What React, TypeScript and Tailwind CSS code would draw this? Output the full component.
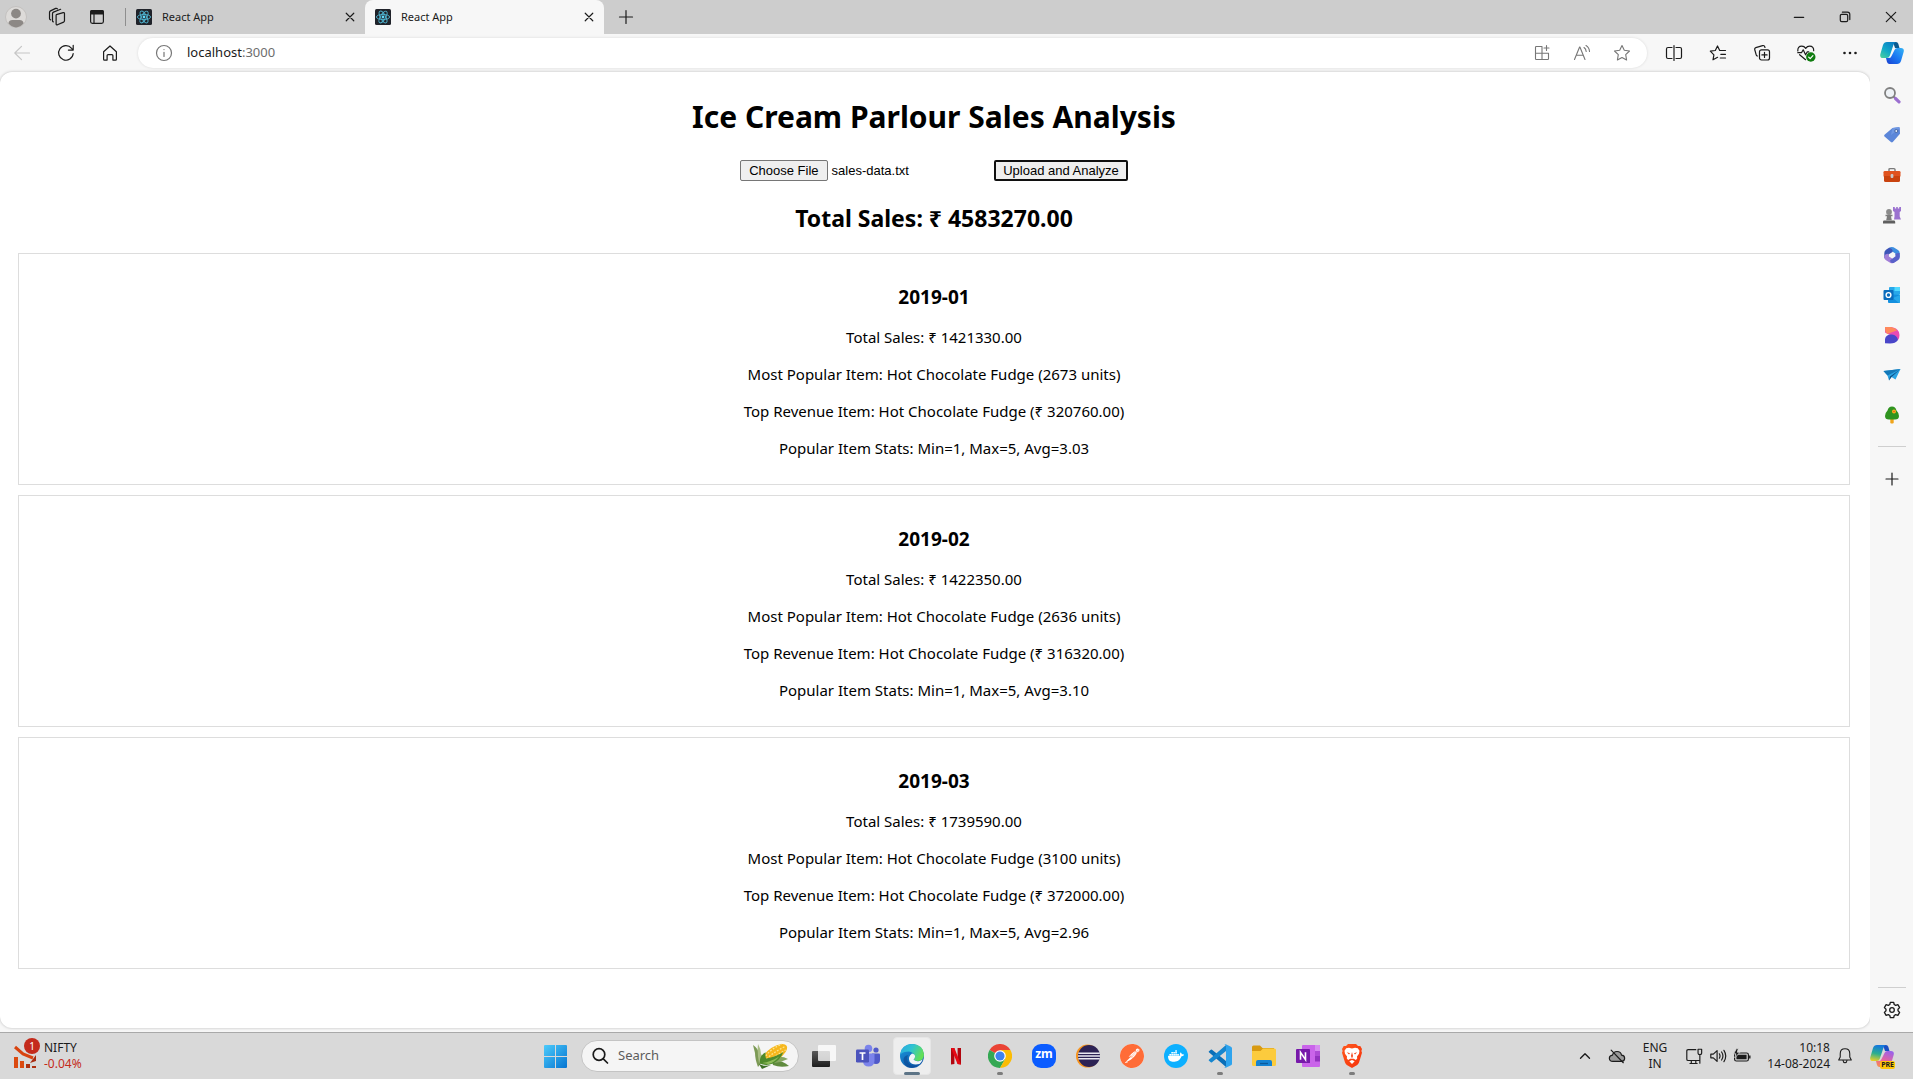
import { useEffect, useRef } from "react";
import type { ReactNode } from "react";
import { SiDocker, SiPostman } from "react-icons/si";

type StrokeProps = { children: ReactNode; className?: string; width?: number };

function Stroke({ children, className = "size-5", width = 1.2 }: StrokeProps) {
  return (
    <svg
      viewBox="0 0 20 20"
      className={className}
      fill="none"
      stroke="currentColor"
      strokeWidth={width}
      strokeLinecap="round"
      strokeLinejoin="round"
      aria-hidden="true"
    >
      {children}
    </svg>
  );
}

function ReactFavicon() {
  return (
    <svg viewBox="0 0 16 16" className="size-4 shrink-0" aria-hidden="true">
      <rect width="16" height="16" rx="1.5" fill="#20232a" />
      <g fill="none" stroke="#4fb3cf" strokeWidth="0.9">
        <ellipse cx="8" cy="8" rx="6.6" ry="2.6" />
        <ellipse cx="8" cy="8" rx="6.6" ry="2.6" transform="rotate(60 8 8)" />
        <ellipse cx="8" cy="8" rx="6.6" ry="2.6" transform="rotate(120 8 8)" />
      </g>
      <circle cx="8" cy="8" r="1.4" fill="#61dafb" />
    </svg>
  );
}

function CloseGlyph({ className = "size-5" }: { className?: string }) {
  return (
    <Stroke className={className} width={1.3}>
      <path d="M5.8 5.8l8.4 8.4M14.2 5.8l-8.4 8.4" />
    </Stroke>
  );
}

function TabLabel() {
  return (
    <>
      <ReactFavicon />
      <span className="flex-1 truncate text-left text-[11px]">React App</span>
    </>
  );
}

function TabStrip() {
  return (
    <div className="flex h-[34px] shrink-0 items-stretch justify-between bg-[#cdcdcd]">
      <div className="flex">
        <div className="flex items-center gap-[19px] pr-[18px] pl-[5px]">
          <button aria-label="Profile">
            <svg viewBox="0 0 22 22" className="size-[22px]">
              <circle cx="11" cy="11" r="10.5" fill="#dddbd9" stroke="#c3c1bf" />
              <circle cx="11" cy="7.6" r="4.9" fill="#8c8885" />
              <path d="M3.5 17.5q0-3.6 4-3.6h7q4 0 4 3.6A10.5 10.5 0 0 1 11 21.5a10.5 10.5 0 0 1-7.500-4z" fill="#8c8885" />
            </svg>
          </button>
          <button aria-label="Workspaces">
            <Stroke className="size-[22px]" width={1.1}>
              <path d="M9.4 7.800l6.200-1.800q1.200-.3 1.200.900v6.600q0 .8-.8 1.200l-5.600 2.400q-1.200.4-1.200-.8V8.600q0-.6.2-.8z" />
              <path d="M6.700 14.500q-.8-.2-.8-1.200V7q0-1 .9-1.400L13.300 3M4.200 12.600q-1-.3-1-1.300V5.800q0-1 .9-1.400l4.700-2.200q1-.4 1.600.4" />
            </Stroke>
          </button>
          <button aria-label="Tab actions">
            <svg viewBox="0 0 20 20" className="size-5" fill="none" stroke="currentColor" strokeWidth="1.2">
              <rect x="3.600" y="3.600" width="12.800" height="12.800" rx="1.800" />
              <path d="M3.600 7V5q0-1.400 1.400-1.400h10q1.400 0 1.400 1.400v2z" fill="currentColor" />
              <path d="M7 7v9.400" />
            </svg>
          </button>
        </div>
        <div className="my-2 w-px bg-[#8e8e8e]" />
        <div className="flex w-[239px] items-center gap-2.5 pr-1.5 pl-2.5">
          <TabLabel />
          <button aria-label="Close first tab">
            <CloseGlyph className="size-[18px]" />
          </button>
        </div>
        <div className="flex w-[239px] items-center gap-2.5 rounded-t-lg bg-[#f7f7f7] pr-1.5 pl-2.5">
          <TabLabel />
          <button aria-label="Close current tab">
            <CloseGlyph className="size-[18px]" />
          </button>
        </div>
        <button aria-label="New tab" className="px-3">
          <Stroke width={1.2}>
            <path d="M10 3.500v13M3.500 10h13" />
          </Stroke>
        </button>
      </div>
      <div className="flex items-center gap-[26px] pr-3">
        <button aria-label="Minimize">
          <Stroke>
            <path d="M5.300 10.300h9.400" />
          </Stroke>
        </button>
        <button aria-label="Restore">
          <Stroke>
            <rect x="5.300" y="7.300" width="7.400" height="7.400" rx="1.400" />
            <path d="M7.400 5.200h5q2.400 0 2.400 2.400v5" />
          </Stroke>
        </button>
        <button aria-label="Close window">
          <Stroke>
            <path d="M5.300 5.300l9.400 9.400M14.700 5.300l-9.400 9.400" />
          </Stroke>
        </button>
      </div>
    </div>
  );
}

function CopilotLogo({ className = "size-6" }: { className?: string }) {
  return (
    <svg viewBox="0 0 24 24" className={className} aria-hidden="true">
      <defs>
        <linearGradient id="cpA" x1="0" y1="1" x2="0.7" y2="0">
          <stop offset="0" stopColor="#4fd39a" />
          <stop offset="0.5" stopColor="#12a9c8" />
          <stop offset="1" stopColor="#0a7fc4" />
        </linearGradient>
        <linearGradient id="cpB" x1="0" y1="1" x2="1" y2="0">
          <stop offset="0" stopColor="#1b3fd0" />
          <stop offset="0.5" stopColor="#1a78f2" />
          <stop offset="1" stopColor="#35b4f5" />
        </linearGradient>
      </defs>
      <path d="M13 1h3q1.700 0 2.300 1.800L19.500 7H15z" fill="#0b5a8f" />
      <path d="M7 1h9q-1.800.5-2.600 3L9.800 14.800q-.8 2.200-3 2.200H3q-3.400 0-2.700-3.700L3 4Q4 1 7 1z" fill="url(#cpA)" />
      <path d="M6 17h3q2 0 2.800-2.500L14.500 9q.8-2 2.900-2H21q3.500 0 2.700 3.800L21 20q-1 3-4 3H9.500Q7.600 23 7 21z" fill="url(#cpB)" />
    </svg>
  );
}

function Toolbar() {
  return (
    <div className="flex h-[38px] shrink-0 items-center bg-[#f7f7f7] pr-2.5 pl-3">
      <div className="flex items-center gap-6">
        <button aria-label="Back" disabled className="text-[#c6c6c6]">
          <Stroke>
            <path d="M17.500 10H2.800M9.500 3.300L2.800 10l6.700 6.700" />
          </Stroke>
        </button>
        <button aria-label="Refresh">
          <Stroke>
            <path d="M17.200 10.500A7.300 7.300 0 1 1 15.600 5.300L17 6.800M17.200 2.300v4.800h-4.800" />
          </Stroke>
        </button>
        <button aria-label="Home">
          <Stroke>
            <path d="M3.600 8.800L10 3l6.400 5.800v7.400q0 .9-.9.900h-2.600v-4.500q0-1-1-1H8.100q-1 0-1 1v4.500H4.500q-.9 0-.9-.9z" />
          </Stroke>
        </button>
      </div>
      <div className="ml-[18px] flex h-[30px] flex-1 items-center rounded-full bg-white pr-[15px] pl-4 shadow-[0_0_3px_rgba(0,0,0,0.12)]">
        <button aria-label="Site information" className="text-[#767676]">
          <Stroke>
            <circle cx="10" cy="10" r="7.500" />
            <path d="M10 9.300v4.200M10 6.500v.1" />
          </Stroke>
        </button>
        <a href="#" className="ml-[13px] flex-1 text-[13px] text-[#6d6d6d]">
          <span className="text-[#1b1b1b]">localhost</span>:3000
        </a>
        <div className="flex items-center gap-5 text-[#767676]">
          <button aria-label="Apps">
            <Stroke width={1.1}>
              <path d="M10 3.500H4.300q-.8 0-.8.800v11.400q0 .8.800.8h11.400q.8 0 .8-.8V10.300H3.500M10 3.500v13M14.500 2.500v5M12 5h5" />
            </Stroke>
          </button>
          <button aria-label="Read aloud">
            <Stroke width={1.1}>
              <path d="M2.500 16.500L7.600 4h.3L13 16.500M4.300 12.300h7M12 4.500q2 1.300 2.200 4M14 2.500q3.300 2 3.500 6" />
            </Stroke>
          </button>
          <button aria-label="Add to favorites">
            <Stroke width={1.1}>
              <path d="M10 2.500l2.300 4.800 5.200.7-3.800 3.700.9 5.300L10 14.500 5.400 17l.9-5.300L2.500 8l5.200-.7z" />
            </Stroke>
          </button>
        </div>
      </div>
      <div className="ml-[17px] flex items-center gap-6">
        <button aria-label="Split screen">
          <Stroke>
            <path d="M8 4.500H4q-1.500 0-1.500 1.500v8q0 1.500 1.500 1.500h4M12 4.500h4q1.500 0 1.500 1.500v8q0 1.500-1.500 1.500h-4M10 2.500v15" />
          </Stroke>
        </button>
        <button aria-label="Favorites">
          <Stroke>
            <path d="M9.600 14.300L5 16.800l.9-5L2.300 8.200l5-.7L9.500 3l2.200 4.500h5.800M12.800 11.300h4.700M12.300 15h5.200" />
          </Stroke>
        </button>
        <button aria-label="Collections">
          <Stroke>
            <rect x="7.500" y="6.800" width="10" height="10.200" rx="2" />
            <path d="M12.500 9.300v5.200M9.900 11.900h5.200M5.500 13q-1 0-1.300-1.200L2.700 6.500Q2.400 5 3.800 4.600l6.800-2q1.400-.4 2 .9l.4 1" />
          </Stroke>
        </button>
        <button aria-label="Browser essentials">
          <svg viewBox="0 0 20 20" className="size-5" fill="none" stroke="currentColor" strokeWidth="1.200" strokeLinecap="round" strokeLinejoin="round">
            <path d="M1.800 8q-.3-4.800 4-4.800 2.400 0 3.900 2.200Q11.200 3.200 13.600 3.200q4.300 0 4.100 4.500M1.800 9.700h3.700l1.700-2.900 2.400 5 1.700-3h1.500M3.600 11.700l6 5" />
            <circle cx="14.800" cy="14" r="4.700" fill="#107c10" stroke="none" />
            <path d="M12.700 14.100l1.500 1.500 2.700-3" stroke="#fff" />
          </svg>
        </button>
        <button aria-label="Settings and more">
          <svg viewBox="0 0 20 20" className="size-5" fill="currentColor">
            <circle cx="4.500" cy="10" r="1.300" />
            <circle cx="10" cy="10" r="1.300" />
            <circle cx="15.500" cy="10" r="1.300" />
          </svg>
        </button>
        <button aria-label="Copilot" className="-mr-px -ml-1">
          <CopilotLogo />
        </button>
      </div>
    </div>
  );
}

const sidebarApps: { name: string; art: ReactNode }[] = [
  {
    name: "Search",
    art: (
      <>
        <circle cx="7" cy="7" r="5" fill="#eef2f6" stroke="#808080" strokeWidth="1.800" />
        <path d="M10.800 10.800l1.500 1.500" stroke="#777" strokeWidth="2" />
        <path d="M12.500 12.500l3.500 3.300" stroke="#9b6fd0" strokeWidth="3.200" strokeLinecap="round" />
      </>
    ),
  },
  {
    name: "Shopping",
    art: (
      <>
        <path d="M9.500 2l6-.9q1.200 0 1.300 1.200l.2 5.500L9.800 16q-.9.900-1.900 0L1.500 10.500q-.9-.9 0-1.800z" fill="#5b86d9" />
        <path d="M9.500 2l6-.9q1.200 0 1.300 1.200L8 9z" fill="#7ba3ea" opacity=".6" />
        <circle cx="13.300" cy="5" r="1.500" fill="#dfe8fa" stroke="#35558f" strokeWidth=".8" />
      </>
    ),
  },
  {
    name: "Tools",
    art: (
      <>
        <path d="M6 5.500V3.600q0-1 1-1h4q1 0 1 1v1.900" fill="none" stroke="#7a7a7a" strokeWidth="1.400" />
        <rect x=".5" y="5" width="17" height="6" rx="1.300" fill="#e0531f" />
        <path d="M1 10h16v4.500q0 1.500-1.500 1.500h-13Q1 16 1 14.500z" fill="#c9430f" />
        <rect x="7.600" y="8" width="2.800" height="4" rx="1" fill="#c9c9c9" />
      </>
    ),
  },
  {
    name: "Games",
    art: (
      <>
        <path d="M10 1h1.800v1.400h1.400V1h1.600v1.400h1.400V1H18v4l-1.300 1v4.500l1.300 3h-7l.5-3V6L10 5z" fill="#9b72d0" />
        <circle cx="6" cy="6" r="2.900" fill="#8b8b8b" />
        <path d="M2.500 8.800h7v1.500H8l.8 4H3.200l.8-4H2.500z" fill="#7c7c7c" />
        <path d="M.8 14.500h10.400q1 0 1 1.500v1.500H0V16q0-1.500.8-1.500z" fill="#5f5f5f" />
      </>
    ),
  },
  {
    name: "Microsoft 365",
    art: (
      <>
        <path d="M6 1.800Q8 .4 10.500 1.300L15 4q1.700 1 1.700 3v4.500l-4.200-2.300V7.600L9.200 5.500z" fill="#3f8fe0" />
        <path d="M6 1.800L3 3.800Q1.300 5 1.300 7v5l4.200 2V8.400l4-2.500Q10.300 3 6 1.800z" fill="#3d55b8" />
        <path d="M1.300 10.500v1Q1.300 13.200 3 14.300l4.500 2.600q1.500.8 3 0l3-1.800-4.300-2.500-3.700-2.300V7.800Q2 7.500 1.300 10.500z" fill="#a27fd8" />
        <path d="M16.700 7v4.500q0 1.700-1.700 2.800l-4.500 2.600q-3 .6-3.500-2.400l5.500-4.200V7.600z" fill="#5961c9" />
      </>
    ),
  },
  {
    name: "Outlook",
    art: (
      <>
        <rect x="6" y="1" width="11" height="8" rx="1" fill="#28a8ea" />
        <path d="M11.500 1H16q1 0 1 1v3h-5.500z" fill="#50d9ff" />
        <path d="M5 8l12 1v7q0 1-1 1H6q-1 0-1-1z" fill="#1490df" />
        <path d="M17 9v7q0 1-1 1l-6-5z" fill="#28a8ea" />
        <rect x=".5" y="4" width="10" height="10" rx="1" fill="#0a6cbd" />
        <circle cx="5.500" cy="9" r="2.400" fill="none" stroke="#fff" strokeWidth="1.400" />
      </>
    ),
  },
  {
    name: "Designer",
    art: (
      <>
        <path d="M2 1h6q8.500 1.500 8.500 8 0 3-1.500 5L11 11 2 6.500z" fill="#e94bb4" />
        <path d="M2 1h6q4 .8 6 3.500L4 8Q1.500 5 2 1z" fill="#ff8a5c" />
        <path d="M2 17.300V13q1-5 7-4.500 5 .5 6 5.500-2.500 3.500-8 3.500z" fill="#4a46c9" />
      </>
    ),
  },
  {
    name: "Drop",
    art: (
      <>
        <path d="M.5 5L17.500 3l-5 10.500-4-2.500-2.500 3.500-1.500-5z" fill="#2aa3e3" />
        <path d="M.5 5L17.500 3 4.500 9.500z" fill="#1378b8" />
        <path d="M6 14.500l1-4L17.500 3 8.500 11z" fill="#0b4f86" />
      </>
    ),
  },
  {
    name: "E-tree",
    art: (
      <>
        <path d="M7.300 12h3.400v5q-1.700 1.200-3.400 0z" fill="#f0a51c" />
        <path d="M9 .5q3.500 0 4.500 4 2.500 2.500 2.500 5.500 0 3.500-4 3.500H6q-4 0-4-3.500 0-3 2.500-5.500Q5.500.5 9 .5z" fill="#2f9420" />
        <circle cx="11" cy="5.500" r="2" fill="#ffb01c" />
        <circle cx="11" cy="5.500" r=".8" fill="#e0531f" />
      </>
    ),
  },
];

function Sidebar() {
  return (
    <aside className="flex w-[43px] shrink-0 flex-col items-center justify-between bg-[#f7f7f7] pb-2">
      <div className="flex flex-col items-center pt-[3px]">
        {sidebarApps.map((app) => (
          <button key={app.name} aria-label={app.name} className="flex h-10 items-center">
            <svg viewBox="0 0 18 18" className="size-[18px]">
              {app.art}
            </svg>
          </button>
        ))}
        <div className="mt-[11px] h-px w-7 bg-[#cfcfcf]" />
        <button aria-label="Customize sidebar" className="mt-[22px]">
          <Stroke width={1.2}>
            <path d="M10 4v12M4 10h12" />
          </Stroke>
        </button>
      </div>
      <div className="flex flex-col items-center gap-3">
        <div className="h-px w-7 bg-[#cfcfcf]" />
        <button aria-label="Settings">
          <Stroke width={1.3}>
            <circle cx="10" cy="10" r="2.300" />
            <path d="M8.300 2.300h3.400l.5 2.200 1.500.9 2.200-.7 1.700 2.900L16 9.200v1.600l1.600 1.600-1.700 2.900-2.200-.7-1.500.9-.5 2.200H8.300l-.5-2.200-1.500-.9-2.200.7-1.700-2.900L4 10.800V9.200L2.400 7.600l1.700-2.900 2.200.7 1.500-.9z" />
          </Stroke>
        </button>
      </div>
    </aside>
  );
}

const months = [
  { month: "2019-01", total: "1421330.00", units: 2673, revenue: "320760.00", avg: "3.03" },
  { month: "2019-02", total: "1422350.00", units: 2636, revenue: "316320.00", avg: "3.10" },
  { month: "2019-03", total: "1739590.00", units: 3100, revenue: "372000.00", avg: "2.96" },
];

function SalesPage() {
  const fileRef = useRef<HTMLInputElement>(null);

  useEffect(() => {
    const transfer = new DataTransfer();
    transfer.items.add(new File([""], "sales-data.txt", { type: "text/plain" }));
    if (fileRef.current) fileRef.current.files = transfer.files;
  }, []);

  return (
    <main className="min-w-0 flex-1 overflow-hidden rounded-xl bg-white pt-[21px] pr-5 pl-[18px] text-center text-black shadow-[0_0_3px_rgba(0,0,0,0.25)]">
      <h1 className="text-[30px] leading-[48px] font-bold">Ice Cream Parlour Sales Analysis</h1>
      <div className="mt-[19px] flex justify-center gap-1 font-['Liberation_Sans',Arial,sans-serif] text-[13px]">
        <input
          ref={fileRef}
          type="file"
          aria-label="Sales data file"
          className="h-[21px] w-[250px] leading-[19px] file:mr-1 file:h-[21px] file:rounded-xs file:border file:border-solid file:border-[#767676] file:bg-[#efefef] file:px-2 file:text-[13px] file:leading-[19px]"
        />
        <button className="h-[21px] rounded-xs border-2 border-[#101010] bg-[#efefef] px-[7px] leading-[17px]">
          Upload and Analyze
        </button>
      </div>
      <h2 className="mt-[21px] text-[23px] leading-8 font-bold">Total Sales: ₹ 4583270.00</h2>
      <div className="mt-[19px] flex flex-col gap-2.5">
        {months.map((m) => (
          <section key={m.month} className="flex flex-col gap-4 border border-[#dddddd] px-2.5 pt-[29px] pb-[25px] text-[15px] leading-[21px]">
            <h3 className="text-[19px] leading-7 font-bold">{m.month}</h3>
            <p>Total Sales: ₹ {m.total}</p>
            <p>Most Popular Item: Hot Chocolate Fudge ({m.units} units)</p>
            <p>Top Revenue Item: Hot Chocolate Fudge (₹ {m.revenue})</p>
            <p>Popular Item Stats: Min=1, Max=5, Avg={m.avg}</p>
          </section>
        ))}
      </div>
    </main>
  );
}

function Art({ children }: { children: ReactNode }) {
  return (
    <svg viewBox="0 0 24 24" className="size-6" aria-hidden="true">
      {children}
    </svg>
  );
}

const taskbarApps: { name: string; running?: boolean; active?: boolean; art: ReactNode }[] = [
  {
    name: "Task view",
    art: (
      <Art>
        <defs>
          <linearGradient id="tvDark" x1="0" y1="0" x2="0" y2="1">
            <stop offset="0" stopColor="#5a5a5a" />
            <stop offset="1" stopColor="#1c1c1c" />
          </linearGradient>
        </defs>
        <rect x="0" y="7" width="18" height="16" rx="1" fill="url(#tvDark)" />
        <rect x="6" y="1" width="18" height="16" rx="1" fill="#fff" opacity=".78" />
      </Art>
    ),
  },
  {
    name: "Teams",
    art: (
      <Art>
        <circle cx="20" cy="6" r="2.600" fill="#5059c9" />
        <path d="M16 9.500h7q1 0 1 1V16q0 4-4 4t-4-3z" fill="#5059c9" />
        <circle cx="12.500" cy="4.500" r="3.800" fill="#7b83eb" />
        <path d="M7 9.500h10.500q1 0 1 1v6q0 6-6 6-5 0-5.500-5z" fill="#7b83eb" />
        <rect x="0" y="5.500" width="13" height="13" rx="1.200" fill="#4b53bc" />
        <path d="M3.500 9h6M6.500 9v7" stroke="#fff" strokeWidth="1.700" />
      </Art>
    ),
  },
  {
    name: "Microsoft Edge",
    active: true,
    art: (
      <Art>
        <defs>
          <linearGradient id="edTop" x1="0" y1="0" x2="1" y2="0.4">
            <stop offset="0" stopColor="#2aa7e0" />
            <stop offset="0.5" stopColor="#2fc3d2" />
            <stop offset="1" stopColor="#63df58" />
          </linearGradient>
          <linearGradient id="edLeft" x1="0" y1="0" x2="0.6" y2="1">
            <stop offset="0" stopColor="#1b9de2" />
            <stop offset="1" stopColor="#0d56a8" />
          </linearGradient>
        </defs>
        <circle cx="12" cy="12" r="12" fill="url(#edLeft)" />
        <path d="M.2 10.500Q1.600 0 12 0q11 .3 12 10.500 0 6-6 6.500-3.500 0-4.500-1.500 2-1.500 1-4.500Q13 8 9 7.500 3 7.500.2 10.500z" fill="url(#edTop)" />
        <path d="M13.500 15.500Q15 17.500 18.500 17.200q2.500-.4 4.200-1.700-1 2.600-3.200 4.500Q12 21.500 9.500 17.500 7.500 13 12 9.500q3.500.5 3 3.500-.3 1.500-1.500 2.500z" fill="#f1f5f8" />
        <path d="M8 11q-2 5 1 8.500 3 3 8 2-3 2.700-7 2.300Q4 22 3.500 16 3.500 12 8 11z" fill="#0c4a94" opacity=".65" />
      </Art>
    ),
  },
  {
    name: "Netflix",
    art: (
      <Art>
        <path d="M7 4h3.400v16l-3.400.4z" fill="#b1060f" />
        <path d="M13.600 4H17v16.400l-3.400-.4z" fill="#b1060f" />
        <path d="M7 4h3.400L17 20.400l-3.500-.4z" fill="#e50914" />
      </Art>
    ),
  },
  {
    name: "Chrome",
    running: true,
    art: (
      <Art>
        <path d="M12 12L1.600 6A12 12 0 0 1 22.400 6z" fill="#ea4335" />
        <path d="M12 12L1.600 6A12 12 0 0 0 12 24l5.200-9z" fill="#34a853" />
        <path d="M12 6h10.400A12 12 0 0 1 12 24l5.200-9z" fill="#fbbc04" />
        <circle cx="12" cy="12" r="5.800" fill="#fff" />
        <circle cx="12" cy="12" r="4.600" fill="#3f82ee" />
      </Art>
    ),
  },
  {
    name: "Zoom",
    art: (
      <span className="flex size-6 items-center justify-center rounded-[9px] bg-[#0b5cff] pb-1 text-[12px] leading-5 font-bold text-white">
        zm
      </span>
    ),
  },
  {
    name: "Eclipse",
    art: (
      <Art>
        <circle cx="11.500" cy="12" r="11.500" fill="#f7941e" />
        <circle cx="13" cy="12" r="11" fill="#2c2255" />
        <path d="M2.300 9.300h21.500M2 12h22M2.300 14.700h21.500" stroke="#e9e7f2" strokeWidth="1.400" />
      </Art>
    ),
  },
  {
    name: "Postman",
    art: (
      <span className="flex size-6 rounded-full bg-white">
        <SiPostman className="size-6 text-[#ff6c37]" />
      </span>
    ),
  },
  {
    name: "Docker",
    art: (
      <span className="flex size-6 items-center justify-center rounded-full bg-[#0db0ff]">
        <SiDocker className="size-4 text-white" />
      </span>
    ),
  },
  {
    name: "Visual Studio Code",
    running: true,
    art: (
      <Art>
        <path d="M1 7.300l1.800-1.500q.6-.4 1.200 0L18 17v6L.9 8.300q-.5-.5.1-1z" fill="#0a6fb8" />
        <path d="M1 16.700l1.800 1.500q.6.400 1.200 0L18 7V1L.9 15.700q-.5.500.1 1z" fill="#1686cf" />
        <path d="M17.800.3L23 2.700q1 .5 1 1.500v15.600q0 1-1 1.500l-5.200 2.400q-.9.300-1.600-.5 1.800.6 1.800-1.200V2q0-1.800-1.800-1.200.7-.8 1.600-.5z" fill="#2ea4ee" />
      </Art>
    ),
  },
  {
    name: "File Explorer",
    art: (
      <Art>
        <path d="M0 3q0-1.500 1.500-1.500H8L10.500 4H22v6H0z" fill="#d89a12" />
        <path d="M0 7h8.500L11 4.500h11.500Q24 4.500 24 6v14.500q0 1.500-1.500 1.500h-21Q0 22 0 20.500z" fill="#fccb3d" />
        <path d="M4 22v-4q0-2 2-2h12q2 0 2 2v4z" fill="#1583d3" />
        <path d="M8 19.500h8" stroke="#0b5a9c" strokeWidth="1.300" />
      </Art>
    ),
  },
  {
    name: "OneNote",
    art: (
      <Art>
        <rect x="6" y="1" width="18" height="22" rx="1" fill="#ca64ea" />
        <path d="M19 1h4q1 0 1 1v5h-5z" fill="#d68bf0" />
        <path d="M19 7h5v5h-5z" fill="#ae4bd5" />
        <path d="M19 12h5v5.500h-5z" fill="#9332bf" />
        <path d="M14 5v14H6v-1h7z" fill="#7b2aa5" />
        <rect x="0" y="5" width="14" height="14" rx="1" fill="#7719aa" />
        <path d="M4.500 15.800V8.300l5 7.400V8.300" fill="none" stroke="#fff" strokeWidth="1.600" />
      </Art>
    ),
  },
  {
    name: "Brave",
    running: true,
    art: (
      <Art>
        <defs>
          <linearGradient id="braveRed" x1="0" y1="0" x2="1" y2="1">
            <stop offset="0" stopColor="#ff5a1f" />
            <stop offset="1" stopColor="#f5300a" />
          </linearGradient>
        </defs>
        <path d="M8 0h8l2 2h2.300L22 5l-.6 2 .6 1.800-3 9.700q-.5 1.500-1.800 2.400L12 24l-5.200-3.100Q5.500 20 5 18.500L2 8.800 2.600 7 2 5l1.700-3H6z" fill="url(#braveRed)" />
        <path d="M12 4.500l3-.7 2.800.4 1.700 2.600-.5 3-2 2.700.2 2-1.400 1.600-2-1.300h-3.600l-2 1.300-1.400-1.600.2-2-2-2.700-.5-3 1.700-2.600L9 3.800z" fill="#fff" />
        <path d="M9.300 17.300L12 16l2.700 1.300L12 20z" fill="#fff" />
        <path d="M6.800 8.300l3.200 1-1 1.300zM17.200 8.300l-3.200 1 1 1.300zM12 8l1 4-1 2.500-1-2.500z" fill="#f5431a" />
      </Art>
    ),
  },
];

function Corn() {
  return (
    <svg viewBox="0 0 38 26" className="h-[26px] w-[38px]" aria-hidden="true">
      <path d="M1 2q5 3 6 9l3 8-4 5Q3 16 3 10z" fill="#7c9a55" />
      <path d="M6 1q3 5 3 10l4 6-6 3Q5 10 6 1z" fill="#a9bd84" />
      <path d="M20 18q8-2 17 5-9 2-16-1z" fill="#5f8a3e" />
      <path d="M24 14q7-1 12 2-6 3-14 4z" fill="#86a660" />
      <g transform="rotate(-33 22 11)">
        <ellipse cx="23" cy="11" rx="14" ry="6.500" fill="#f6b71d" />
        <path d="M14 8q9-3 20-1M13 11q12-2 23 0M13 14q10-1 21 0" stroke="#fde48a" strokeWidth="1.300" strokeDasharray="1.800 1.500" fill="none" />
        <path d="M5 11q4-7 11-6-3 3-3 5.500 9 4 18 4-7 5-15 4Q8 17 5 11z" fill="#4f8a2c" />
        <path d="M7 12q8 4 18 4-7 2.500-13 .5z" fill="#8dbb58" />
      </g>
      <path d="M7 21q5 3 12 1l-9 4z" fill="#3d6f27" />
    </svg>
  );
}

function Taskbar() {
  return (
    <footer className="grid h-[47px] shrink-0 grid-cols-[1fr_auto_1fr] items-center border-t border-[#a9a9a9] bg-[#d9d9d9] text-[#1b1b1b]">
      <button className="relative flex items-center gap-1.5 justify-self-start pl-3.5 text-left">
        <svg viewBox="0 0 24 24" className="size-6" aria-hidden="true">
          <path d="M1 3l8 7 10 4" fill="none" stroke="#d8430f" strokeWidth="3" />
          <path d="M16 19l6-8v6z" fill="#a82c10" />
          <path d="M0 13h4v11H0zM6 17h4v7H6z" fill="#db4a10" />
          <path d="M12 20h4v4h-4zM18 22h4v2h-4z" fill="#ad3010" />
        </svg>
        <span className="absolute -top-0.5 left-6 flex size-4 items-center justify-center rounded-full bg-[#c42b1c] text-[10px] text-white">
          1
        </span>
        <span className="text-[12px] leading-4">
          <span className="block">NIFTY</span>
          <span className="block text-[#c42b1c]">-0.04%</span>
        </span>
      </button>

      <nav className="flex items-center pl-[5px]" aria-label="Taskbar">
        <button aria-label="Start" className="pr-3.5">
          <svg viewBox="0 0 23 23" className="size-[23px]">
            <defs>
              <linearGradient id="winBlue" x1="0" y1="0" x2="1" y2="1">
                <stop offset="0" stopColor="#4ccbfb" />
                <stop offset="1" stopColor="#0574d1" />
              </linearGradient>
            </defs>
            <path d="M0 1q0-1 1-1h10v11H0zM12 0h10q1 0 1 1v10H12zM0 12h11v11H1q-1 0-1-1zM12 12h11v10q0 1-1 1H12z" fill="url(#winBlue)" />
          </svg>
        </button>
        <label className="flex h-8 w-[218px] items-center rounded-full border border-[#c4c4c4] bg-[#f5f5f5] pr-2 pl-2">
          <Stroke width={1.700}>
            <circle cx="9" cy="8.500" r="5.800" />
            <path d="M13.300 12.800l4.200 4.200" />
          </Stroke>
          <input
            type="text"
            placeholder="Search"
            aria-label="Search"
            className="ml-2 min-w-0 flex-1 bg-transparent text-[13px] placeholder:text-[#5c5c5c]"
          />
          <Corn />
        </label>
        <div className="ml-[3px] flex">
          {taskbarApps.map((app) => (
            <button key={app.name} aria-label={app.name} className="relative flex h-[46px] w-11 items-center justify-center">
              {app.active && <span className="absolute inset-x-[3px] inset-y-1 rounded-sm border border-[#e6e6e6] bg-[#eeeeee]" />}
              <span className="relative">{app.art}</span>
              {app.active && <span className="absolute bottom-1 h-[3px] w-4 rounded-full bg-[#5d7486]" />}
              {app.running && <span className="absolute bottom-1 h-[3px] w-1.5 rounded-full bg-[#7c7c7c]" />}
            </button>
          ))}
        </div>
      </nav>

      <div className="flex items-center justify-self-end pr-[19px]">
        <button aria-label="Show hidden icons">
          <Stroke className="size-[18px]" width={1.500}>
            <path d="M5 12.500l5-5 5 5" />
          </Stroke>
        </button>
        <button aria-label="OneDrive" className="ml-[14px]">
          <Stroke className="size-[18px]" width={1.300}>
            <path d="M5.500 16q-4 0-4-3.500 0-3 3.500-3.500Q6 5 10 5q4.300 0 5 4 3.500.3 3.500 3.500T15 16z" fill="#9a9a9a" />
            <path d="M3.500 3.500l13.500 14" />
          </Stroke>
        </button>
        <button className="ml-[17px] text-center text-[12px] leading-4">
          ENG
          <br />
          IN
        </button>
        <button aria-label="Network, volume and battery" className="ml-[18px] flex items-center gap-1.5">
          <Stroke className="size-[18px]" width={1.300}>
            <path d="M12 3H3.500Q2 3 2 4.500v9Q2 15 3.500 15h12M7 15v3M12 15v3M5.500 18.300h8M14.500 2.500h4V7q0 1.500-2 1.500t-2-1.500zM16.500 8.500V18" />
          </Stroke>
          <Stroke className="size-[18px]" width={1.300}>
            <path d="M2 8v4h2.800L9 16V4L4.800 8zM11.500 7.500q1.500 2.500 0 5M14 5.500q3 4.500 0 9M16.600 3.700q4 6.300 0 12.600" />
          </Stroke>
          <svg viewBox="0 0 18 18" className="size-[18px]" aria-hidden="true">
            <rect x="1.600" y="6" width="13.800" height="8" rx="1.800" fill="none" stroke="#1b1b1b" strokeWidth="1.200" />
            <rect x="3.400" y="7.700" width="10.200" height="4.600" fill="#1b1b1b" />
            <path d="M16.800 8.500v3" stroke="#1b1b1b" strokeWidth="1.400" />
            <path d="M3.500 1.500L.6 6.800h2.300L1.800 10.800 7 5.300H4.300l1-3.800z" fill="#1b1b1b" stroke="#d9d9d9" strokeWidth=".8" />
          </svg>
        </button>
        <button className="ml-4 text-right text-[12px] leading-4">
          10:18
          <br />
          14-08-2024
        </button>
        <button aria-label="Notifications" className="ml-1.5">
          <Stroke className="size-[18px]" width={1.200}>
            <path d="M10 2q5.300 0 5.300 5.500V11l1.700 3.500H3L4.700 11V7.500Q4.700 2 10 2zM7.800 15q.3 2.500 2.200 2.500t2.200-2.500" />
          </Stroke>
        </button>
        <button aria-label="Copilot preview" className="relative ml-4">
          <svg viewBox="0 0 24 24" className="size-6">
            <defs>
              <linearGradient id="preA" x1="0.3" y1="0" x2="0.1" y2="1">
                <stop offset="0" stopColor="#1478dc" />
                <stop offset="0.5" stopColor="#2cae8f" />
                <stop offset="1" stopColor="#f5d21f" />
              </linearGradient>
              <linearGradient id="preB" x1="0.7" y1="0" x2="0.3" y2="1">
                <stop offset="0" stopColor="#9a62ea" />
                <stop offset="0.6" stopColor="#e9649b" />
                <stop offset="1" stopColor="#f78b52" />
              </linearGradient>
            </defs>
            <path d="M13 1h3q1.700 0 2.300 1.800L19.500 7H15z" fill="#1a4fc4" />
            <path d="M7 1h9q-1.800.5-2.600 3L9.800 14.800q-.8 2.200-3 2.200H3q-3.400 0-2.700-3.700L3 4Q4 1 7 1z" fill="url(#preA)" />
            <path d="M6 17h3q2 0 2.800-2.500L14.500 9q.8-2 2.900-2H21q3.500 0 2.700 3.800L21 20q-1 3-4 3H9.500Q7.600 23 7 21z" fill="url(#preB)" />
          </svg>
          <span className="absolute -right-px -bottom-px rounded-xs bg-[#ffc60a] px-px text-[7px] leading-[8px] font-bold">
            PRE
          </span>
        </button>
      </div>
    </footer>
  );
}

export default function App() {
  return (
    <div className="flex h-screen flex-col overflow-hidden bg-[#f7f7f7] font-['Noto_Sans','Open_Sans',sans-serif] text-[#1b1b1b]">
      <TabStrip />
      <Toolbar />
      <div className="flex min-h-0 flex-1 pb-1">
        <SalesPage />
        <Sidebar />
      </div>
      <Taskbar />
    </div>
  );
}
